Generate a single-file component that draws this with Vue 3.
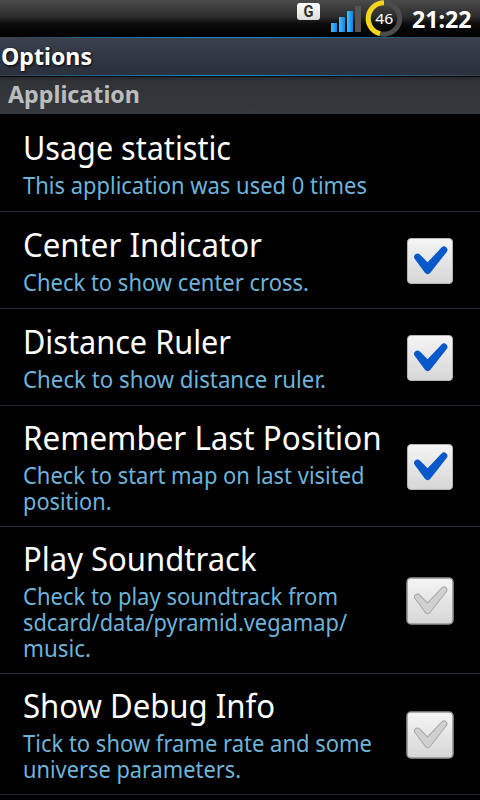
<script setup>
const rows = [
  { title: ['Usage statistic', 208], lines: [['This application was used 0 times', 344]], size: 'first' },
  { title: ['Center Indicator', 239], lines: [['Check to show center cross.', 286]], size: 'single', checked: true },
  { title: ['Distance Ruler', 208], lines: [['Check to show distance ruler.', 303]], size: 'single', checked: true },
  { title: ['Remember Last Position', 358.5], lines: [['Check to start map on last visited', 341.5], ['position.', 88.5]], size: 'double', checked: true },
  { title: ['Play Soundtrack', 233.5], lines: [['Check to play soundtrack from', 315], ['sdcard/data/pyramid.vegamap/', 324], ['music.', 68]], size: 'triple', checked: false },
  { title: ['Show Debug Info', 252], lines: [['Tick to show frame rate and some', 349], ['universe parameters.', 218]], size: 'double', checked: false },
]

const tick = 'M12.5 21L22.7 31.2L39 13.9L22.7 34.6Z'

// Condenses a line of text to the given advance width in pixels.
const vFit = {
  mounted(el, { value }) {
    el.style.transform = `scaleX(${value / el.getBoundingClientRect().width})`
  },
}
</script>

<template>
  <main class="screen">
    <header class="status">
      <svg class="indicators" width="110" height="37" viewBox="0 0 110 37">
        <defs>
          <linearGradient id="badge" x2="0" y2="1"><stop stop-color="#fff" /><stop offset="1" stop-color="#dcdcdc" /></linearGradient>
          <linearGradient id="bar"><stop stop-color="#49bdff" /><stop offset="1" stop-color="#0b86e4" /></linearGradient>
        </defs>
        <rect x="1" y="3" width="23" height="17" rx="3" fill="url(#badge)" />
        <text class="network" x="7.5" y="17" textLength="10" lengthAdjust="spacingAndGlyphs">G</text>
        <g fill="url(#bar)">
          <rect x="35" y="23" width="6" height="9" />
          <rect x="43" y="17" width="6" height="15" />
          <rect x="51" y="11" width="6" height="21" />
        </g>
        <rect x="59" y="6" width="6" height="26" fill="#555" />
        <circle cx="88" cy="18.5" r="15.7" fill="none" stroke="#4c4c4c" stroke-width="5" />
        <path d="M88 2.8A15.7 15.7 0 0 0 84 33.7" fill="none" stroke="#f3d51c" stroke-width="5" />
        <text class="level" x="88.3" y="24" text-anchor="middle" textLength="18" lengthAdjust="spacingAndGlyphs">46</text>
      </svg>
      <span class="clock"><span v-fit="59.5" class="fit">21:22</span></span>
    </header>
    <div class="titlebar"><span v-fit="91" class="fit">Options</span></div>
    <div class="section"><span v-fit="132" class="fit">Application</span></div>
    <section v-for="row in rows" :key="row.title[0]" class="row" :class="row.size">
      <div class="copy">
        <div class="title"><span v-fit="row.title[1]" class="fit">{{ row.title[0] }}</span></div>
        <div v-for="line in row.lines" :key="line[0]" class="summary"><span v-fit="line[1]" class="fit">{{ line[0] }}</span></div>
      </div>
      <svg v-if="row.checked !== undefined" class="check" width="50" height="50" viewBox="0 0 50 50">
        <defs><linearGradient id="box" x2="0" y2="1"><stop stop-color="#f5f5f5" /><stop offset="1" stop-color="#d6d6d6" /></linearGradient></defs>
        <template v-if="row.checked">
          <rect x="2.5" y="2.5" width="45" height="45" rx="3.5" fill="url(#box)" stroke="#b5b5b5" />
          <path :d="tick" fill="#0759cb" stroke="#0759cb" stroke-width="6.8" stroke-linejoin="round" />
        </template>
        <template v-else>
          <rect x="2" y="2" width="46" height="46" rx="4" fill="url(#box)" stroke="#929292" stroke-width="1.5" />
          <path :d="tick" fill="#d0d0d0" stroke="#a5a5a5" stroke-width="6.8" stroke-linejoin="round" />
          <path :d="tick" fill="#d0d0d0" stroke="#d0d0d0" stroke-width="5" stroke-linejoin="round" />
        </template>
      </svg>
    </section>
  </main>
</template>

<style>
body { background: #000; }
</style>

<style scoped>
.screen {
  width: 480px;
  height: 800px;
  overflow: hidden;
  background: #000;
  color: #fff;
  font-family: "Noto Sans", "Open Sans", sans-serif;
}
.fit {
  display: inline-block;
  white-space: nowrap;
  transform-origin: 0 50%;
}
.status {
  box-sizing: border-box;
  display: flex;
  height: 37px;
  padding-left: 296px;
  background: linear-gradient(#4b4b4b 0, #2c2c2c 45%, #0c0c0c 65%, #000);
}
.indicators { flex: none; }
.network { font: bold 17px "Roboto", sans-serif; fill: #303030; }
.level { font-size: 15px; fill: #fff; }
.clock {
  width: 68px;
  padding-left: 6px;
  font-size: 23px;
  font-weight: 700;
  line-height: 39px;
}
.titlebar {
  box-sizing: border-box;
  height: 39px;
  padding-left: 1px;
  border-top: 1px solid;
  border-bottom: 1px solid;
  border-image: linear-gradient(90deg, #34404a, #1488c8 40%, #1488c8 55%, #34404a) 1;
  background: linear-gradient(#3a414d, #2a303d);
  font-size: 23px;
  font-weight: 700;
  line-height: 37px;
  text-shadow: 1px 1px 3px #000;
}
.section {
  box-sizing: border-box;
  height: 38px;
  padding-left: 8px;
  border-top: 1px solid #08090b;
  background: linear-gradient(#26282c, #303338 12%, #35383d);
  color: #bdbdbd;
  font-size: 23px;
  font-weight: 700;
  line-height: 35px;
}
.row {
  box-sizing: border-box;
  display: flex;
  align-items: center;
  padding-right: 25px;
  padding-left: 23px;
  border-bottom: 1px solid #252c35;
}
.first { height: 98px; }
.single { height: 97px; }
.double { height: 121px; }
.triple { height: 147px; }
.copy { flex: 1; min-width: 0; align-self: flex-start; padding-top: 14px; }
.first .copy { padding-top: 16px; }
.single .copy { padding-top: 15px; }
.title { height: 42px; font-size: 33px; line-height: 35px; }
.summary { height: 26px; color: #6eb3d9; font-size: 23px; line-height: 26px; }
.check { flex: none; margin-top: 2px; }
</style>
